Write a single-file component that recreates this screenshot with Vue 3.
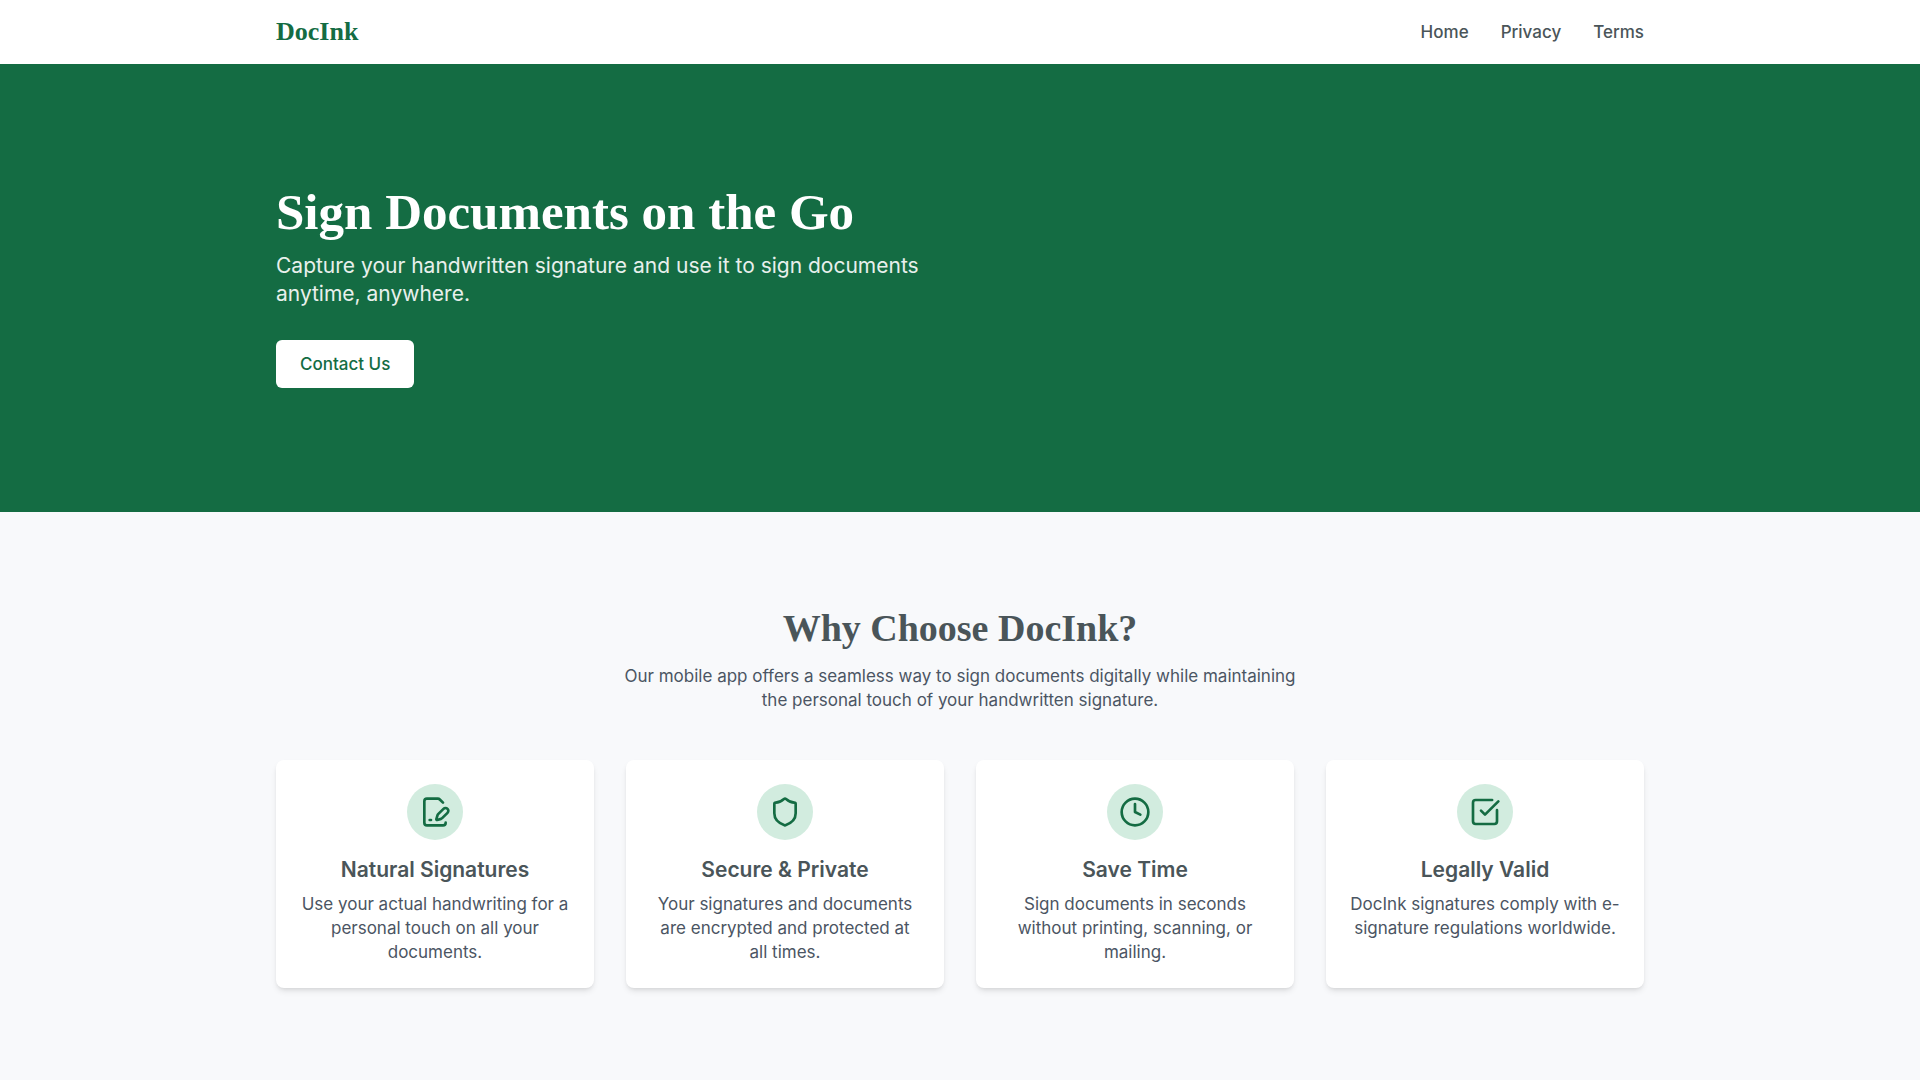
<template>
  <div class="page">
    <header class="site-header">
      <div class="container header-inner">
        <a href="#" class="brand">DocInk</a>

        <nav class="nav">
          <a v-for="link in links" :key="link.label" :href="link.href" class="nav-link">
            {{ link.label }}
          </a>
        </nav>
      </div>
    </header>

    <main>
      <section class="hero">
        <div class="container">
          <div class="hero-content">
            <h1 class="hero-title">Sign Documents on the Go</h1>
            <p class="hero-text">
              Capture your handwritten signature and use it to sign documents anytime, anywhere.
            </p>
            <a href="#contact" class="hero-button">Contact Us</a>
          </div>
        </div>
      </section>

      <section class="features">
        <div class="container">
          <div class="features-intro">
            <h2 class="features-title">Why Choose DocInk?</h2>
            <p class="features-text">
              Our mobile app offers a seamless way to sign documents digitally while maintaining the
              personal touch of your handwritten signature.
            </p>
          </div>

          <div class="feature-grid">
            <article v-for="feature in features" :key="feature.title" class="feature-card">
              <div class="feature-icon">
                <svg viewBox="0 0 24 24" aria-hidden="true">
                  <path v-for="d in feature.paths" :key="d" :d="d" />
                </svg>
              </div>
              <h3 class="feature-title">{{ feature.title }}</h3>
              <p class="feature-text">{{ feature.text }}</p>
            </article>
          </div>
        </div>
      </section>
    </main>
  </div>
</template>

<script setup>
const links = [
  { label: 'Home', href: '#' },
  { label: 'Privacy', href: '#privacy' },
  { label: 'Terms', href: '#terms' },
]

const features = [
  {
    title: 'Natural Signatures',
    text: 'Use your actual handwriting for a personal touch on all your documents.',
    paths: [
      'm18 5-2.414-2.414A2 2 0 0 0 14.172 2H6a2 2 0 0 0-2 2v16a2 2 0 0 0 2 2h12a2 2 0 0 0 2-2',
      'M21.378 12.626a1 1 0 0 0-3.004-3.004l-4.01 4.012a2 2 0 0 0-.506.854l-.837 2.87a.5.5 0 0 0 .62.62l2.87-.837a2 2 0 0 0 .854-.506z',
      'M8 18h1',
    ],
  },
  {
    title: 'Secure & Private',
    text: 'Your signatures and documents are encrypted and protected at all times.',
    paths: [
      'M20 13c0 5-3.5 7.5-7.66 8.95a1 1 0 0 1-.67-.01C7.5 20.5 4 18 4 13V6a1 1 0 0 1 1-1c2 0 4.5-1.2 6.24-2.72a1.17 1.17 0 0 1 1.52 0C14.51 3.81 17 5 19 5a1 1 0 0 1 1 1z',
    ],
  },
  {
    title: 'Save Time',
    text: 'Sign documents in seconds without printing, scanning, or mailing.',
    paths: ['M2 12a10 10 0 1 0 20 0a10 10 0 1 0-20 0', 'M12 6v6l4 2'],
  },
  {
    title: 'Legally Valid',
    text: 'DocInk signatures comply with e-signature regulations worldwide.',
    paths: [
      'M21 10.656V19a2 2 0 0 1-2 2H5a2 2 0 0 1-2-2V5a2 2 0 0 1 2-2h12.344',
      'm9 11 3 3L22 4',
    ],
  },
]
</script>

<style>
body {
  margin: 0;
  background: #f8f9fb;
}
</style>

<style scoped>
.page {
  font-family: Inter, 'Liberation Sans', sans-serif;
  font-size: 17px;
  line-height: 24px;
  color: #4b5563;
}

h1,
h2,
h3,
p {
  margin: 0;
}

a {
  text-decoration: none;
}

.container {
  box-sizing: border-box;
  width: 100%;
  max-width: 1400px;
  margin: 0 auto;
  padding: 0 16px;
}

.site-header {
  background: #ffffff;
}

.header-inner {
  display: flex;
  align-items: center;
  justify-content: space-between;
  min-height: 64px;
}

.brand,
.hero-title,
.features-title {
  font-family: 'Liberation Serif', serif;
  font-weight: 700;
}

.brand {
  font-size: 26px;
  line-height: 32px;
  color: #146c43;
}

.nav {
  display: flex;
  gap: 32px;
}

.nav-link {
  font-weight: 500;
  color: #4a5559;
}

.hero {
  padding: 124px 0;
  background: #146c43;
  color: #ffffff;
}

.hero-content {
  max-width: 672px;
}

.hero-title {
  margin-bottom: 16px;
  font-size: 51px;
  line-height: 48px;
}

.hero-text {
  margin-bottom: 32px;
  font-size: 21px;
  line-height: 28px;
  color: #e8f0ec;
}

.hero-button {
  display: inline-flex;
  align-items: center;
  padding: 12px 24px;
  border-radius: 6px;
  background: #ffffff;
  font-weight: 500;
  color: #146c43;
  vertical-align: top;
}

.features {
  padding: 96px 0;
  background: #f8f9fb;
}

.features-intro {
  max-width: 672px;
  margin: 0 auto 48px;
  text-align: center;
}

.features-title {
  margin-bottom: 16px;
  font-size: 38px;
  line-height: 40px;
  color: #4a5559;
}

.feature-grid {
  display: grid;
  grid-template-columns: repeat(4, 1fr);
  gap: 32px;
}

.feature-card {
  display: flex;
  flex-direction: column;
  align-items: center;
  padding: 24px;
  border-radius: 8px;
  background: #ffffff;
  text-align: center;
  box-shadow:
    0 4px 6px -1px rgba(0, 0, 0, 0.1),
    0 2px 4px -2px rgba(0, 0, 0, 0.1);
}

.feature-icon {
  display: flex;
  align-items: center;
  justify-content: center;
  width: 56px;
  height: 56px;
  margin-bottom: 16px;
  border-radius: 50%;
  background: #d2ecdf;
}

.feature-icon svg {
  width: 32px;
  height: 32px;
  fill: none;
  stroke: #146c43;
  stroke-width: 2;
  stroke-linecap: round;
  stroke-linejoin: round;
}

.feature-title {
  margin-bottom: 8px;
  font-size: 21px;
  font-weight: 600;
  line-height: 28px;
  color: #4a5559;
}

@media (max-width: 1100px) {
  .feature-grid {
    grid-template-columns: repeat(2, 1fr);
  }
}

@media (max-width: 600px) {
  .feature-grid {
    grid-template-columns: 1fr;
  }
}
</style>
